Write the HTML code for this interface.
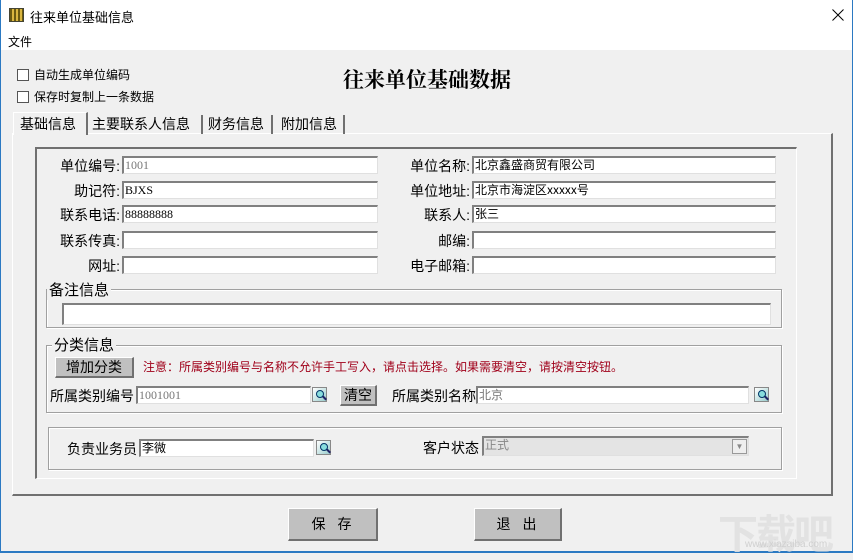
<!DOCTYPE html>
<html><head><meta charset="utf-8"><style>
*{margin:0;padding:0;box-sizing:border-box}
body{width:853px;height:553px;overflow:hidden;background:#f0f0f0;font-family:"Liberation Sans","Noto Sans CJK SC",sans-serif;font-size:13px;color:#000;position:relative}
.a{position:absolute;white-space:nowrap}
.inp{position:absolute;background:#fff;border-top:2px solid #808080;border-left:2px solid #808080;border-right:1px solid #e0e0e0;border-bottom:1px solid #e0e0e0;font-size:12px;line-height:14px;padding-left:1px;font-family:"Liberation Serif","Noto Sans CJK SC",serif}
.grp{position:absolute;border:1px solid #a0a0a0;box-shadow:inset 1px 1px 0 #fff,1px 1px 0 #fff}
.lbl{position:absolute;text-align:right;white-space:nowrap;font-size:14px}
.btn{position:absolute;background:#c0c0c0;border-top:1px solid #fff;border-left:1px solid #fff;border-right:2px solid #707070;border-bottom:2px solid #707070;text-align:center;font-size:14px}
.cb{position:absolute;width:12px;height:12px;background:#fff;border:1px solid #555}
.ic{position:absolute;width:15px;height:15px;background:linear-gradient(135deg,#fff,#9cc);border:1px solid #888}
.ic:after{content:"";position:absolute;left:3px;top:2px;width:6px;height:6px;border:1px solid #036;border-radius:50%;background:#8dd}
.ic:before{content:"";position:absolute;left:9px;top:9px;width:5px;height:2px;background:#226;transform:rotate(45deg)}
</style></head><body>
<div class="a" style="left:0;top:0;width:853px;height:50px;background:#fff"></div>
<div class="a" style="left:0;top:0;width:1px;height:553px;background:#2b79c2"></div>
<div class="a" style="left:852px;top:0;width:1px;height:553px;background:#2b79c2"></div>
<div class="a" style="left:0;top:551px;width:853px;height:2px;background:#2b79c2"></div>
<div class="a" style="left:9px;top:8px;width:15px;height:14px;background:repeating-linear-gradient(90deg,#6b5a10 0 2px,#d9b640 2px 4px);border:1px solid #443"></div>
<div class="a" style="left:30px;top:7px;font-size:13px">往来单位基础信息</div>
<svg class="a" style="left:832px;top:9px" width="12" height="12"><path d="M0.5 0.5L11.5 11.5M11.5 0.5L0.5 11.5" stroke="#000" stroke-width="1"/></svg>
<div class="a" style="left:8px;top:33px;font-size:12px">文件</div>

<div class="cb" style="left:17px;top:69px"></div><div class="a" style="left:34px;top:66px;font-size:12px">自动生成单位编码</div>
<div class="cb" style="left:17px;top:91px"></div><div class="a" style="left:34px;top:88px;font-size:12px">保存时复制上一条数据</div>
<div class="a" style="left:343px;top:64px;font-size:21px;font-weight:bold;font-family:'Noto Serif CJK SC',serif">往来单位基础数据</div>

<div class="a" style="left:12px;top:133px;width:821px;height:363px;border-top:1px solid #fff;border-left:1px solid #fff;border-right:2px solid #707070;border-bottom:2px solid #707070"></div>
<div class="a" style="left:13px;top:112px;width:75px;height:23px;background:#f0f0f0;border-top:1px solid #fff;border-left:1px solid #fff;border-right:2px solid #707070;font-size:14px;padding:1px 0 0 6px">基础信息</div>
<div class="a" style="left:88px;top:115px;width:115px;height:19px;border-right:2px solid #707070;font-size:14px;padding-left:4px;line-height:18px">主要联系人信息</div>
<div class="a" style="left:203px;top:115px;width:70px;height:19px;border-right:2px solid #707070;font-size:14px;padding-left:5px;line-height:18px">财务信息</div>
<div class="a" style="left:273px;top:115px;width:72px;height:19px;border-right:2px solid #707070;font-size:14px;padding-left:8px;line-height:18px">附加信息</div>

<div class="a" style="left:35px;top:147px;width:762px;height:332px;border-top:2px solid #707070;border-left:2px solid #707070;border-right:1px solid #fff;border-bottom:1px solid #fff"></div>

<div class="lbl" style="left:40px;top:156px;width:80px">单位编号:</div><div class="inp" style="left:122px;top:156px;width:256px;height:18px;color:#777">1001</div>
<div class="lbl" style="left:40px;top:181px;width:80px">助记符:</div><div class="inp" style="left:122px;top:181px;width:256px;height:18px">BJXS</div>
<div class="lbl" style="left:40px;top:205px;width:80px">联系电话:</div><div class="inp" style="left:122px;top:205px;width:256px;height:18px">88888888</div>
<div class="lbl" style="left:40px;top:231px;width:80px">联系传真:</div><div class="inp" style="left:122px;top:231px;width:256px;height:18px"></div>
<div class="lbl" style="left:40px;top:256px;width:80px">网址:</div><div class="inp" style="left:122px;top:256px;width:256px;height:18px"></div>

<div class="lbl" style="left:390px;top:156px;width:80px">单位名称:</div><div class="inp" style="left:472px;top:156px;width:304px;height:18px;font-family:'Noto Sans CJK SC',sans-serif">北京鑫盛商贸有限公司</div>
<div class="lbl" style="left:390px;top:181px;width:80px">单位地址:</div><div class="inp" style="left:472px;top:181px;width:304px;height:18px;font-family:'Noto Sans CJK SC',sans-serif">北京市海淀区xxxxx号</div>
<div class="lbl" style="left:390px;top:205px;width:80px">联系人:</div><div class="inp" style="left:472px;top:205px;width:304px;height:18px;font-family:'Noto Sans CJK SC',sans-serif">张三</div>
<div class="lbl" style="left:390px;top:231px;width:80px">邮编:</div><div class="inp" style="left:472px;top:231px;width:304px;height:18px"></div>
<div class="lbl" style="left:390px;top:256px;width:80px">电子邮箱:</div><div class="inp" style="left:472px;top:256px;width:304px;height:18px"></div>

<div class="grp" style="left:46px;top:289px;width:736px;height:39px"></div>
<div class="a" style="left:47px;top:279px;font-size:15px;background:#f0f0f0;padding:0 2px">备注信息</div>
<div class="inp" style="left:62px;top:303px;width:709px;height:22px"></div>

<div class="grp" style="left:46px;top:345px;width:736px;height:68px"></div>
<div class="a" style="left:52px;top:334px;font-size:15px;background:#f0f0f0;padding:0 2px">分类信息</div>
<div class="btn" style="left:55px;top:357px;width:79px;height:21px;line-height:18px">增加分类</div>
<div class="a" style="left:143px;top:358px;font-size:12px;color:#a0001a">注意：所属类别编号与名称不允许手工写入，请点击选择。如果需要清空，请按清空按钮。</div>
<div class="a" style="left:50px;top:386px;font-size:14px">所属类别编号</div>
<div class="inp" style="left:136px;top:386px;width:175px;height:18px;color:#777">1001001</div>
<div class="ic" style="left:312px;top:387px"></div>
<div class="btn" style="left:340px;top:385px;width:37px;height:21px;line-height:18px">清空</div>
<div class="a" style="left:392px;top:386px;font-size:14px">所属类别名称</div>
<div class="inp" style="left:476px;top:386px;width:273px;height:18px;color:#777;font-family:'Noto Sans CJK SC',sans-serif">北京</div>
<div class="ic" style="left:754px;top:387px"></div>

<div class="grp" style="left:48px;top:427px;width:734px;height:43px"></div>
<div class="a" style="left:67px;top:439px;font-size:14px">负责业务员</div>
<div class="inp" style="left:139px;top:439px;width:175px;height:18px;font-family:'Noto Sans CJK SC',sans-serif">李微</div>
<div class="ic" style="left:316px;top:440px"></div>
<div class="a" style="left:423px;top:438px;font-size:14px">客户状态</div>
<div class="inp" style="left:482px;top:436px;width:267px;height:20px;background:#e4e4e4;color:#888;font-family:'Noto Sans CJK SC',sans-serif">正式</div>
<div class="a" style="left:732px;top:439px;width:15px;height:15px;border:1px solid #999;background:#eee;font-size:8px;color:#888;text-align:center;line-height:14px">▼</div>

<div class="btn" style="left:288px;top:508px;width:90px;height:33px;line-height:30px;letter-spacing:12px;padding-left:10px">保存</div>
<div class="btn" style="left:474px;top:508px;width:88px;height:33px;line-height:30px;letter-spacing:12px;padding-left:10px">退出</div>

<div class="a" style="left:718px;top:502px;font-size:40px;color:#e2e2e2;font-weight:bold;letter-spacing:-2px">下载吧</div>
<div class="a" style="left:745px;top:539px;font-size:10px;color:#d0d0d0">www.xiazaiba.com</div>
</body></html>
